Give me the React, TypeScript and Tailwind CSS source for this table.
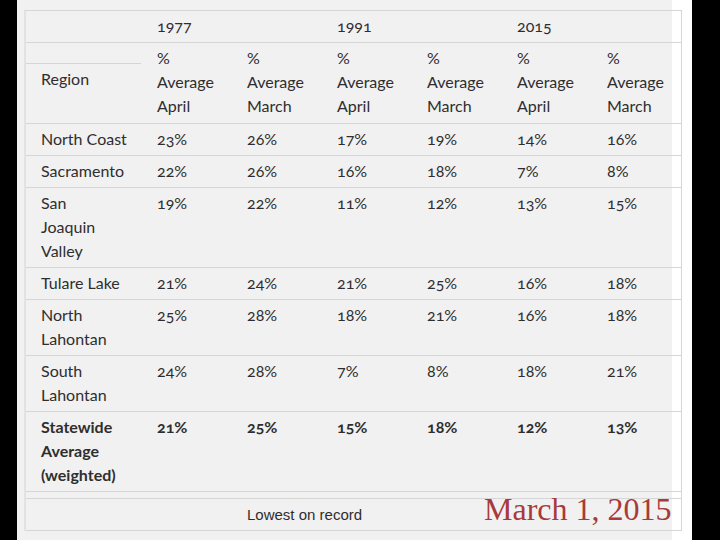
import React from "react";

const rows: { name: string[]; vals: string[]; bold?: boolean }[] = [
  { name: ["North Coast"], vals: ["23%", "26%", "17%", "19%", "14%", "16%"] },
  { name: ["Sacramento"], vals: ["22%", "26%", "16%", "18%", "7%", "8%"] },
  { name: ["San", "Joaquin", "Valley"], vals: ["19%", "22%", "11%", "12%", "13%", "15%"] },
  { name: ["Tulare Lake"], vals: ["21%", "24%", "21%", "25%", "16%", "18%"] },
  { name: ["North", "Lahontan"], vals: ["25%", "28%", "18%", "21%", "16%", "18%"] },
  { name: ["South", "Lahontan"], vals: ["24%", "28%", "7%", "8%", "18%", "21%"] },
  { name: ["Statewide", "Average", "(weighted)"], vals: ["21%", "25%", "15%", "18%", "12%", "13%"], bold: true },
];

const grid = "grid grid-cols-[115px_repeat(6,90px)] border-b border-[#d6d6d6]";

export default function App() {
  return (
    <div className="relative w-[720px] h-[540px] overflow-hidden bg-[linear-gradient(to_right,#000_0px,#000_17px,#f1f1f1_17px,#f1f1f1_672px,#fff_672px,#fff_692px,#000_692px)] pt-[10px] pl-[24px] text-[#2e2e2e] font-['Lato','Liberation_Sans',sans-serif] text-[16px] leading-6 oldstyle-nums">
      <div className="w-[658px] border-l-2 border-l-[#e2e2e2] border-t border-r border-t-[#d6d6d6] border-r-[#d6d6d6]">
        <div className={grid}>
          <div className="pt-[3px] pb-1 pl-[15px]">&nbsp;</div>
          <div className="col-span-2 pt-[3px] pb-1 pl-4">1977</div>
          <div className="col-span-2 pt-[3px] pb-1 pl-4">1991</div>
          <div className="col-span-2 pt-[3px] pb-1 pl-4">2015</div>
        </div>
        <div className={grid}>
          <div className="flex flex-col">
            <div className="h-[21px] border-b border-[#d6d6d6]" />
            <div className="pt-[3px] pl-[15px]">Region</div>
          </div>
          {["April", "March", "April", "March", "April", "March"].map((m, i) => (
            <div key={i} className="pt-[3px] pb-[5px] pl-4">
              <div>%</div>
              <div>Average</div>
              <div>{m}</div>
            </div>
          ))}
        </div>
        {rows.map((r, i) => (
          <div key={i} className={`${grid} ${r.bold ? "font-bold" : ""}`}>
            <div className="pt-[3px] pb-1 pl-[15px]">
              {r.name.map((n, j) => (
                <div key={j}>{n}</div>
              ))}
            </div>
            {r.vals.map((v, j) => (
              <div key={j} className="pt-[3px] pb-1 pl-4">
                {v}
              </div>
            ))}
          </div>
        ))}
        <div className="h-[7px] border-b border-[#d6d6d6]" />
        <div className={grid}>
          <div className="col-start-3 col-span-5 pt-1 pb-[3px] pl-4 font-['Liberation_Sans',Arial,sans-serif] text-[15px]">
            Lowest on record
          </div>
        </div>
      </div>
      <div className="absolute left-[484px] top-[493px] leading-none text-[32px] text-[#a83a3c] font-['Liberation_Serif',serif]">
        March 1, 2015
      </div>
    </div>
  );
}
